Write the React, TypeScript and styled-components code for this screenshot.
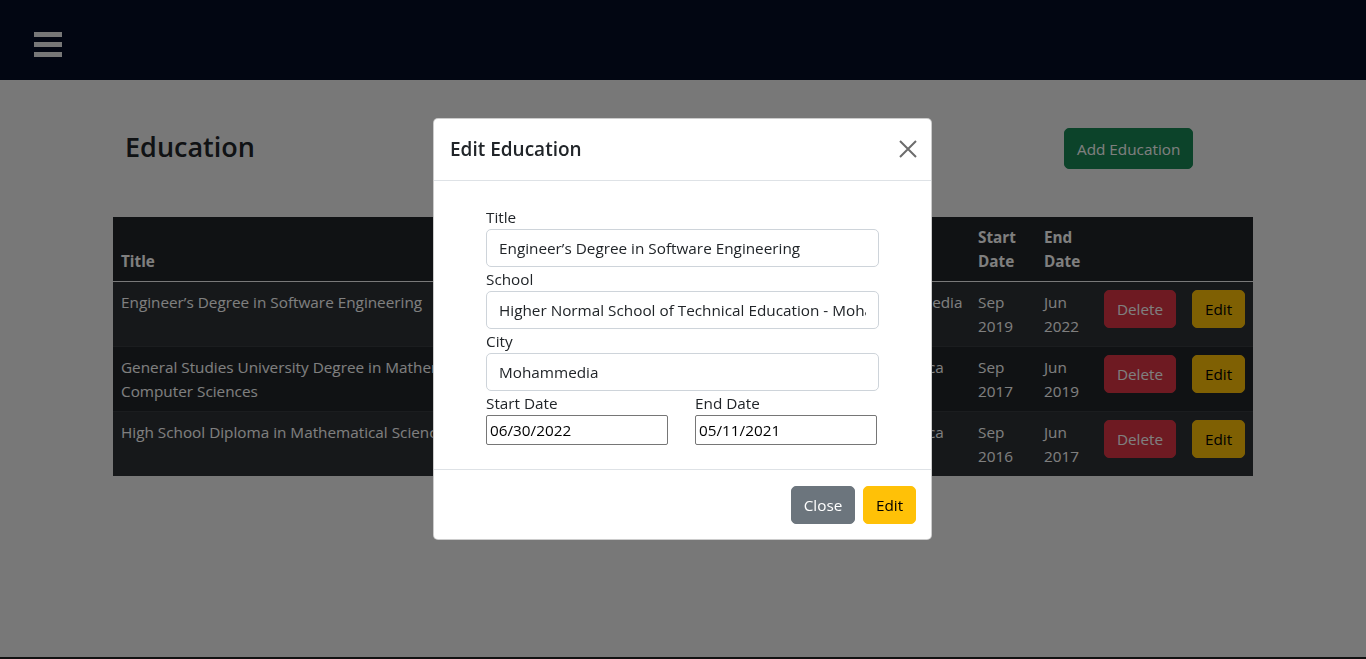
import React from "react";
import styled, { createGlobalStyle } from "styled-components";

const FONT = `"Segoe UI", "Open Sans", "Noto Sans", Arial, sans-serif`;
const FS = "15.3px";

const GlobalStyle = createGlobalStyle`
  html, body { margin: 0; padding: 0; }
  body {
    font-family: ${FONT};
    font-size: ${FS};
    line-height: 24px;
    color: #212529;
    background: #f0f0f0;
    overflow: hidden;
  }
  * { box-sizing: border-box; }
`;

const Page = styled.div`
  display: flex;
  flex-direction: column;
  height: 659px;
`;

const NavBar = styled.nav`
  height: 80px;
  flex: none;
  background: #050c24;
  display: flex;
  align-items: flex-start;
  padding: 32px 0 0 34px;
`;

const Burger = styled.button`
  width: 28px;
  height: 25px;
  padding: 0;
  border: 0;
  background: transparent;
  display: flex;
  flex-direction: column;
  justify-content: space-between;
  span {
    display: block;
    height: 5px;
    background: #eeeeee;
  }
`;

const Main = styled.main`
  flex: 1;
  width: 1140px;
  margin: 0 auto;
  padding-top: 48px;
`;

const HeaderRow = styled.div`
  display: flex;
  align-items: center;
  justify-content: space-between;
  padding: 0 60px 0 12px;
  height: 41px;
  margin-bottom: 48px;
`;

const Heading = styled.h3`
  margin: -4px 0 0;
  font-size: 27px;
  font-weight: 600;
  line-height: 34px;
  color: #212529;
`;

const Btn = styled.button<{ $variant: "success" | "danger" | "warning" | "secondary" }>`
  font-family: ${FONT};
  font-size: ${FS};
  line-height: 24px;
  padding: 6px 12px;
  border-radius: 5px;
  border: 1px solid transparent;
  cursor: pointer;
  white-space: nowrap;
  ${({ $variant }) =>
    $variant === "success"
      ? "background:#198754;border-color:#198754;color:#fff;"
      : $variant === "danger"
      ? "background:#dc3545;border-color:#dc3545;color:#fff;"
      : $variant === "warning"
      ? "background:#ffc107;border-color:#ffc107;color:#000;"
      : "background:#6c757d;border-color:#6c757d;color:#fff;"}
`;

const AddBtn = styled(Btn)`
  height: 41px;
  padding: 7px 12px;
  width: 129px;
`;

const RowBtn = styled(Btn)<{ $w: number }>`
  width: ${({ $w }) => $w}px;
  padding: 6px 0;
  text-align: center;
`;

const Table = styled.table`
  width: 1140px;
  table-layout: fixed;
  border-collapse: collapse;
  background: #212529;
  color: #fff;
  th, td {
    padding: 8px;
    text-align: left;
    vertical-align: top;
    border-bottom: 1px solid #373b3e;
  }
  th {
    font-weight: 700;
    vertical-align: bottom;
  }
  thead th {
    border-bottom: 1px solid #f3f3f3;
  }
  tbody tr:nth-child(odd) td {
    background: #2c3034;
  }
  tbody tr:last-child td {
    border-bottom: 0;
  }
`;

const Footer = styled.footer`
  height: 2px;
  flex: none;
  background: #222;
`;

const Backdrop = styled.div`
  position: fixed;
  inset: 0;
  background: rgba(0, 0, 0, 0.5);
  display: flex;
  justify-content: center;
  align-items: flex-start;
  padding-top: 118px;
`;

const Modal = styled.div`
  width: 499px;
  margin-left: -1px;
  background: #fff;
  border: 1px solid rgba(0, 0, 0, 0.2);
  border-radius: 5px;
  color: #212529;
`;

const ModalHeader = styled.div`
  display: flex;
  align-items: center;
  justify-content: space-between;
  padding: 15px 15px 16px 16px;
  border-bottom: 1px solid #dee2e6;
`;

const ModalTitle = styled.h5`
  margin: 0;
  font-size: 19px;
  font-weight: 600;
  line-height: 30px;
`;

const CloseX = styled.button`
  width: 24px;
  height: 24px;
  margin-right: -4px;
  padding: 0;
  border: 0;
  background: transparent;
  display: flex;
  align-items: center;
  justify-content: center;
`;

const ModalBody = styled.div`
  padding: 24px 16px;
`;

const Form = styled.form`
  margin: 0 36px;
  display: flex;
  flex-direction: column;
`;

const Label = styled.label`
  display: block;
  font-size: ${FS};
  line-height: 24px;
`;

const TextInput = styled.input`
  display: block;
  width: 100%;
  height: 38px;
  padding: 6px 12px;
  font-family: ${FONT};
  font-size: ${FS};
  line-height: 24px;
  color: #212529;
  border: 1px solid #ced4da;
  border-radius: 5px;
  background: #fff;
  outline: none;
`;

const DateRow = styled.div`
  display: grid;
  grid-template-columns: 182px 182px;
  column-gap: 27px;
`;

const DateInput = styled.input`
  display: block;
  width: 182px;
  height: 30px;
  padding: 1px 3px;
  font-family: ${FONT};
  font-size: ${FS};
  color: #000;
  border: 1px solid #767676;
  border-radius: 2px;
  background: #fff;
  outline: none;
`;

const ModalFooter = styled.div`
  display: flex;
  justify-content: flex-end;
  gap: 8px;
  padding: 16px 15px 15px;
  border-top: 1px solid #dee2e6;
`;

const rows = [
  {
    title: "Engineer’s Degree in Software Engineering",
    school: "Higher Normal School of Technical Education",
    city: "Mohammedia",
    start: ["Sep", "2019"],
    end: ["Jun", "2022"],
  },
  {
    title: "General Studies University Degree in Mathematical and Computer Sciences",
    school: "Faculty of Sciences and Techniques",
    city: "Casablanca",
    start: ["Sep", "2017"],
    end: ["Jun", "2019"],
  },
  {
    title: "High School Diploma in Mathematical Sciences",
    school: "Al Khawarizmi High School",
    city: "Casablanca",
    start: ["Sep", "2016"],
    end: ["Jun", "2017"],
  },
];

export default function App() {
  return (
    <>
      <GlobalStyle />
      <Page>
        <NavBar>
          <Burger aria-label="menu">
            <span />
            <span />
            <span />
          </Burger>
        </NavBar>
        <Main>
          <HeaderRow>
            <Heading>Education</Heading>
            <AddBtn $variant="success">Add Education</AddBtn>
          </HeaderRow>
          <Table>
            <colgroup>
              <col style={{ width: 440 }} />
              <col style={{ width: 302 }} />
              <col style={{ width: 115 }} />
              <col style={{ width: 66 }} />
              <col style={{ width: 60 }} />
              <col style={{ width: 88 }} />
              <col style={{ width: 69 }} />
            </colgroup>
            <thead>
              <tr>
                <th>Title</th>
                <th>School</th>
                <th>City</th>
                <th>Start Date</th>
                <th>End Date</th>
                <th></th>
                <th></th>
              </tr>
            </thead>
            <tbody>
              {rows.map((r) => (
                <tr key={r.title}>
                  <td>{r.title}</td>
                  <td>{r.school}</td>
                  <td>{r.city}</td>
                  <td>
                    {r.start[0]}
                    <br />
                    {r.start[1]}
                  </td>
                  <td>
                    {r.end[0]}
                    <br />
                    {r.end[1]}
                  </td>
                  <td>
                    <RowBtn $variant="danger" $w={72}>Delete</RowBtn>
                  </td>
                  <td>
                    <RowBtn $variant="warning" $w={53}>Edit</RowBtn>
                  </td>
                </tr>
              ))}
            </tbody>
          </Table>
        </Main>
        <Footer />
      </Page>
      <Backdrop>
        <Modal role="dialog">
          <ModalHeader>
            <ModalTitle>Edit Education</ModalTitle>
            <CloseX aria-label="Close">
              <svg width="18" height="18" viewBox="0 0 18 18">
                <path d="M1 1L17 17M17 1L1 17" stroke="#6c6c6c" strokeWidth="2" />
              </svg>
            </CloseX>
          </ModalHeader>
          <ModalBody>
            <Form>
              <Label>Title</Label>
              <TextInput readOnly value="Engineer’s Degree in Software Engineering" />
              <Label>School</Label>
              <TextInput readOnly value="Higher Normal School of Technical Education - Mohammedia" />
              <Label>City</Label>
              <TextInput readOnly value="Mohammedia" />
              <DateRow>
                <div>
                  <Label>Start Date</Label>
                  <DateInput readOnly value="06/30/2022" />
                </div>
                <div>
                  <Label>End Date</Label>
                  <DateInput readOnly value="05/11/2021" />
                </div>
              </DateRow>
            </Form>
          </ModalBody>
          <ModalFooter>
            <RowBtn $variant="secondary" $w={64}>Close</RowBtn>
            <RowBtn $variant="warning" $w={53}>Edit</RowBtn>
          </ModalFooter>
        </Modal>
      </Backdrop>
    </>
  );
}
